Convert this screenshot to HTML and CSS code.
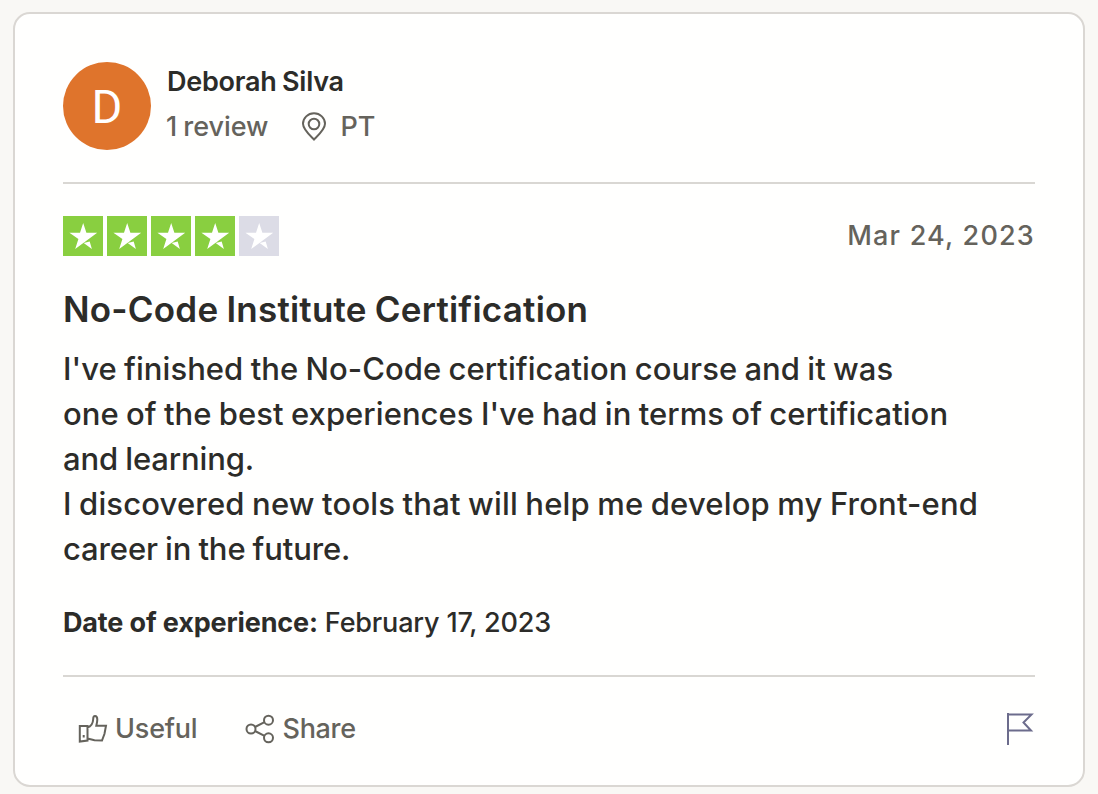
FILE: index.html
```html
<!DOCTYPE html>
<html lang="en">
<head>
<meta charset="utf-8">
<title>Customer review</title>
<link rel="stylesheet" href="styles.css">
</head>
<body>
<svg class="defs" aria-hidden="true">
  <symbol id="star" viewBox="0 0 40 40">
    <path d="M20 7l3.200 9.700H34L12 33l3.200-10.100L6.200 16.700h10.600zM20.500 27.100l6-1.500 2.200 7.400z"/>
  </symbol>
</svg>
<article class="card">
  <header class="author">
    <div class="avatar">D</div>
    <div class="who">
      <div class="name">Deborah Silva</div>
      <div class="meta">
        <span class="count">1 review</span>
        <svg class="pin" viewBox="0 0 26 30"><path d="M13 28.500C8.500 24 2 18.500 2 12.800a11 10.500 0 0 1 22 0C24 18.500 17.500 24 13 28.500z"/><circle cx="13" cy="13" r="5.300"/></svg>
        <span class="country">PT</span>
      </div>
    </div>
  </header>
  <section class="review">
    <div class="rating">
      <div class="stars">
        <svg class="star"><use href="#star"/></svg>
        <svg class="star"><use href="#star"/></svg>
        <svg class="star"><use href="#star"/></svg>
        <svg class="star"><use href="#star"/></svg>
        <svg class="star empty"><use href="#star"/></svg>
      </div>
      <time class="posted">Mar 24, 2023</time>
    </div>
    <h2 class="title">No-Code Institute Certification</h2>
    <p class="body">I've finished the No-Code certification course and it was<br>one of the best experiences I've had in terms of certification<br><span class="tight">and learning.</span><br><span class="loose">I discovered new tools that will help me develop my Front-end</span><br><span class="tight">career in the future.</span></p>
    <p class="experience"><b>Date of experience:</b> <span>February 17, 2023</span></p>
  </section>
  <footer class="actions">
    <div class="action useful">
      <svg class="thumb" viewBox="0 0 30 30"><path d="M1.800 12h7.700v14.500l-7.700 1zM9.500 13.500c3.500-1 5.500-4 5.700-8.500 0-2 .6-3 1.800-3 1.600 0 2.300 1.500 2.300 3.500 0 2-.5 4-1 6.300H28l-1.500 8-2.500 6.700-7.500-.3-7-1.700"/><path d="M5.700 21v2.500"/></svg>
      <span>Useful</span>
    </div>
    <div class="action share">
      <svg class="nodes" viewBox="0 0 30 30"><circle cx="6" cy="15" r="4.500"/><circle cx="23.500" cy="6.200" r="4.500"/><circle cx="23.500" cy="23.800" r="4.500"/><path d="M10 13l9.500-4.800M10 17l9.500 4.800"/></svg>
      <span>Share</span>
    </div>
    <svg class="flag" viewBox="0 0 28 34"><path class="pole" d="M2 1v32"/><path d="M2 2.500h23.500L17.500 10.500l7.500 8H2"/></svg>
  </footer>
</article>
</body>
</html>
```
FILE: styles.css
```css
* { box-sizing: border-box; margin: 0; }
body {
  height: 794px;
  padding: 12px 13px 0;
  overflow: hidden;
  background: #f9f8f5;
  color: #2c2c29;
  font-family: Inter, "Liberation Sans", sans-serif;
  font-size: 27px;
  white-space: nowrap;
}
.defs { display: none; }
.card {
  width: 1072px;
  height: 775px;
  padding: 48px;
  border: 2px solid #dad7d3;
  border-radius: 17px;
  background: #fffffe;
}
.author {
  display: flex;
  gap: 16px;
  height: 122px;
  border-bottom: 2px solid #d9d7d3;
}
.avatar {
  width: 88px;
  height: 88px;
  border-radius: 50%;
  background: #df742c;
  color: #fff;
  font: 400 47px/90px Roboto, sans-serif;
  text-align: center;
}
.name { height: 40px; line-height: 39px; font-weight: 600; letter-spacing: -.25px; word-spacing: -1px; }
.meta { display: flex; align-items: center; height: 48px; color: #65635c; font-weight: 500; }
.count { margin-left: -1px; letter-spacing: -.05px; word-spacing: -1px; }
.pin { width: 26px; height: 30px; margin: 0 13px 0 33px; }
.pin, .thumb, .nodes, .flag { fill: none; stroke: #65635c; stroke-width: 2; }
.review { padding-top: 32px; height: 493px; border-bottom: 2px solid #d9d7d3; }
.rating { display: flex; justify-content: space-between; height: 40px; }
.stars { display: flex; gap: 3.5px; }
.star { width: 40.4px; height: 40px; background: #89cf40; fill: #fff; }
.star.empty { background: #dcdce6; }
.posted { line-height: 39px; color: #65635c; font-weight: 500; letter-spacing: 1.2px; }
.title { margin-top: 29px; font-size: 35px; line-height: 48px; font-weight: 600; letter-spacing: .22px; word-spacing: -1px; }
.body { margin-top: 13px; font-size: 31px; line-height: 45px; font-weight: 500; letter-spacing: .05px; word-spacing: -1px; }
.tight { letter-spacing: -.12px; }
.loose { letter-spacing: .17px; }
.experience { margin-top: 31px; line-height: 42px; font-weight: 500; letter-spacing: -.17px; }
.experience b { font-weight: 700; letter-spacing: -.15px; }
.actions { display: flex; align-items: center; height: 104px; color: #65635c; font-weight: 500; padding-left: 15px; }
.action { display: flex; align-items: center; }
.action svg { width: 30px; height: 30px; margin-right: 7px; }
.action span { position: relative; top: -1px; letter-spacing: -.2px; }
.share { margin-left: 48px; }
.share span { letter-spacing: -.3px; }
.flag { width: 28px; height: 34px; margin: 0 1px 0 auto; stroke: #6c6c8c; }
```
